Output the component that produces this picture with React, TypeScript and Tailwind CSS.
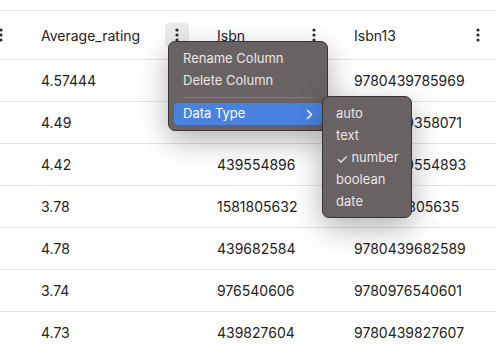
import React from 'react';

const rows = [
  { rating: '4.57444', isbn: '439785960', isbn13: '9780439785969' },
  { rating: '4.49', isbn: '439358078', isbn13: '9780439358071' },
  { rating: '4.42', isbn: '439554896', isbn13: '9780439554893' },
  { rating: '3.78', isbn: '1581805632', isbn13: '9781581805635' },
  { rating: '4.78', isbn: '439682584', isbn13: '9780439682589' },
  { rating: '3.74', isbn: '976540606', isbn13: '9780976540601' },
  { rating: '4.73', isbn: '439827604', isbn13: '9780439827607' },
];

const Kebab = ({ active }: { active?: boolean }) => (
  <div className={`flex h-6 w-6 shrink-0 items-center justify-center rounded ${active ? 'bg-[#ebebeb]' : ''}`}>
    <svg width="4" height="14" viewBox="0 0 4 14">
      <circle cx="2" cy="2" r="1.6" fill="#2b2b2b" />
      <circle cx="2" cy="7" r="1.6" fill="#2b2b2b" />
      <circle cx="2" cy="12" r="1.6" fill="#2b2b2b" />
    </svg>
  </div>
);

const cols = ['w-[25px]', 'w-[176px]', 'w-[137px]', 'w-[164px]'];

const App: React.FC = () => {
  return (
    <div className="relative h-[352px] w-[496px] overflow-hidden bg-white font-['Inter',sans-serif] text-[14px] text-[#222]">
      <div className="mt-[10px] border-t border-[#e3e3e3]">
        {/* header */}
        <div className="flex h-[49px] border-b border-[#e3e3e3]">
          <div className={`${cols[0]} flex shrink-0 items-center justify-end pr-3`}>
            <Kebab />
          </div>
          <div className={`${cols[1]} flex shrink-0 items-center justify-between pl-4 pr-3`}>
            <span>Average_rating</span>
            <Kebab active />
          </div>
          <div className={`${cols[2]} flex shrink-0 items-center justify-between pl-4 pr-3`}>
            <span>Isbn</span>
            <Kebab />
          </div>
          <div className={`${cols[3]} flex shrink-0 items-center justify-between pl-4 pr-3`}>
            <span>Isbn13</span>
            <Kebab />
          </div>
        </div>
        {rows.map((r) => (
          <div key={r.isbn13} className="flex h-[42px] border-b border-[#e3e3e3]">
            <div className={`${cols[0]} shrink-0`} />
            <div className={`${cols[1]} flex shrink-0 items-center pl-4`}>{r.rating}</div>
            <div className={`${cols[2]} flex shrink-0 items-center pl-4`}>{r.isbn}</div>
            <div className={`${cols[3]} flex shrink-0 items-center pl-4`}>{r.isbn13}</div>
          </div>
        ))}
      </div>

      {/* column menu */}
      <div className="absolute left-[168px] top-[41px] w-[160px] rounded-[7px] border border-[#3a3535] bg-[#696262] p-[5px] text-[13px] text-[#ebe6e6] shadow-[0_10px_30px_rgba(0,0,0,0.3)]">
        <div className="flex h-[22px] items-center px-[9px] pt-px">Rename Column</div>
        <div className="flex h-[22px] items-center px-[9px] pt-px">Delete Column</div>
        <div className="flex h-[12px] items-center px-[9px]">
          <div className="h-px w-full bg-[#857e7e]" />
        </div>
        <div className="flex h-[22px] items-center justify-between rounded-[4px] bg-[#4a82e0] pl-[9px] pr-[9px] text-white">
          <span>Data Type</span>
          <svg width="7" height="11" viewBox="0 0 7 11" fill="none">
            <path d="M1.5 1.5 L5.5 5.5 L1.5 9.5" stroke="white" strokeWidth="1.6" strokeLinecap="round" strokeLinejoin="round" />
          </svg>
        </div>
      </div>

      {/* data type submenu */}
      <div className="absolute left-[322px] top-[96px] w-[90px] rounded-[7px] border border-[#3a3535] bg-[#696262] px-[5px] pb-[4px] pt-[6px] text-[13px] text-[#ebe6e6] shadow-[0_10px_30px_rgba(0,0,0,0.3)]">
        <div className="flex h-[22px] items-center px-[8px]">auto</div>
        <div className="flex h-[22px] items-center px-[8px]">text</div>
        <div className="flex h-[22px] items-center px-[8px]">
          <span className="mr-[3px] text-[14px]">✓</span>number
        </div>
        <div className="flex h-[22px] items-center px-[8px]">boolean</div>
        <div className="flex h-[22px] items-center px-[8px]">date</div>
      </div>
    </div>
  );
};

export default App;
